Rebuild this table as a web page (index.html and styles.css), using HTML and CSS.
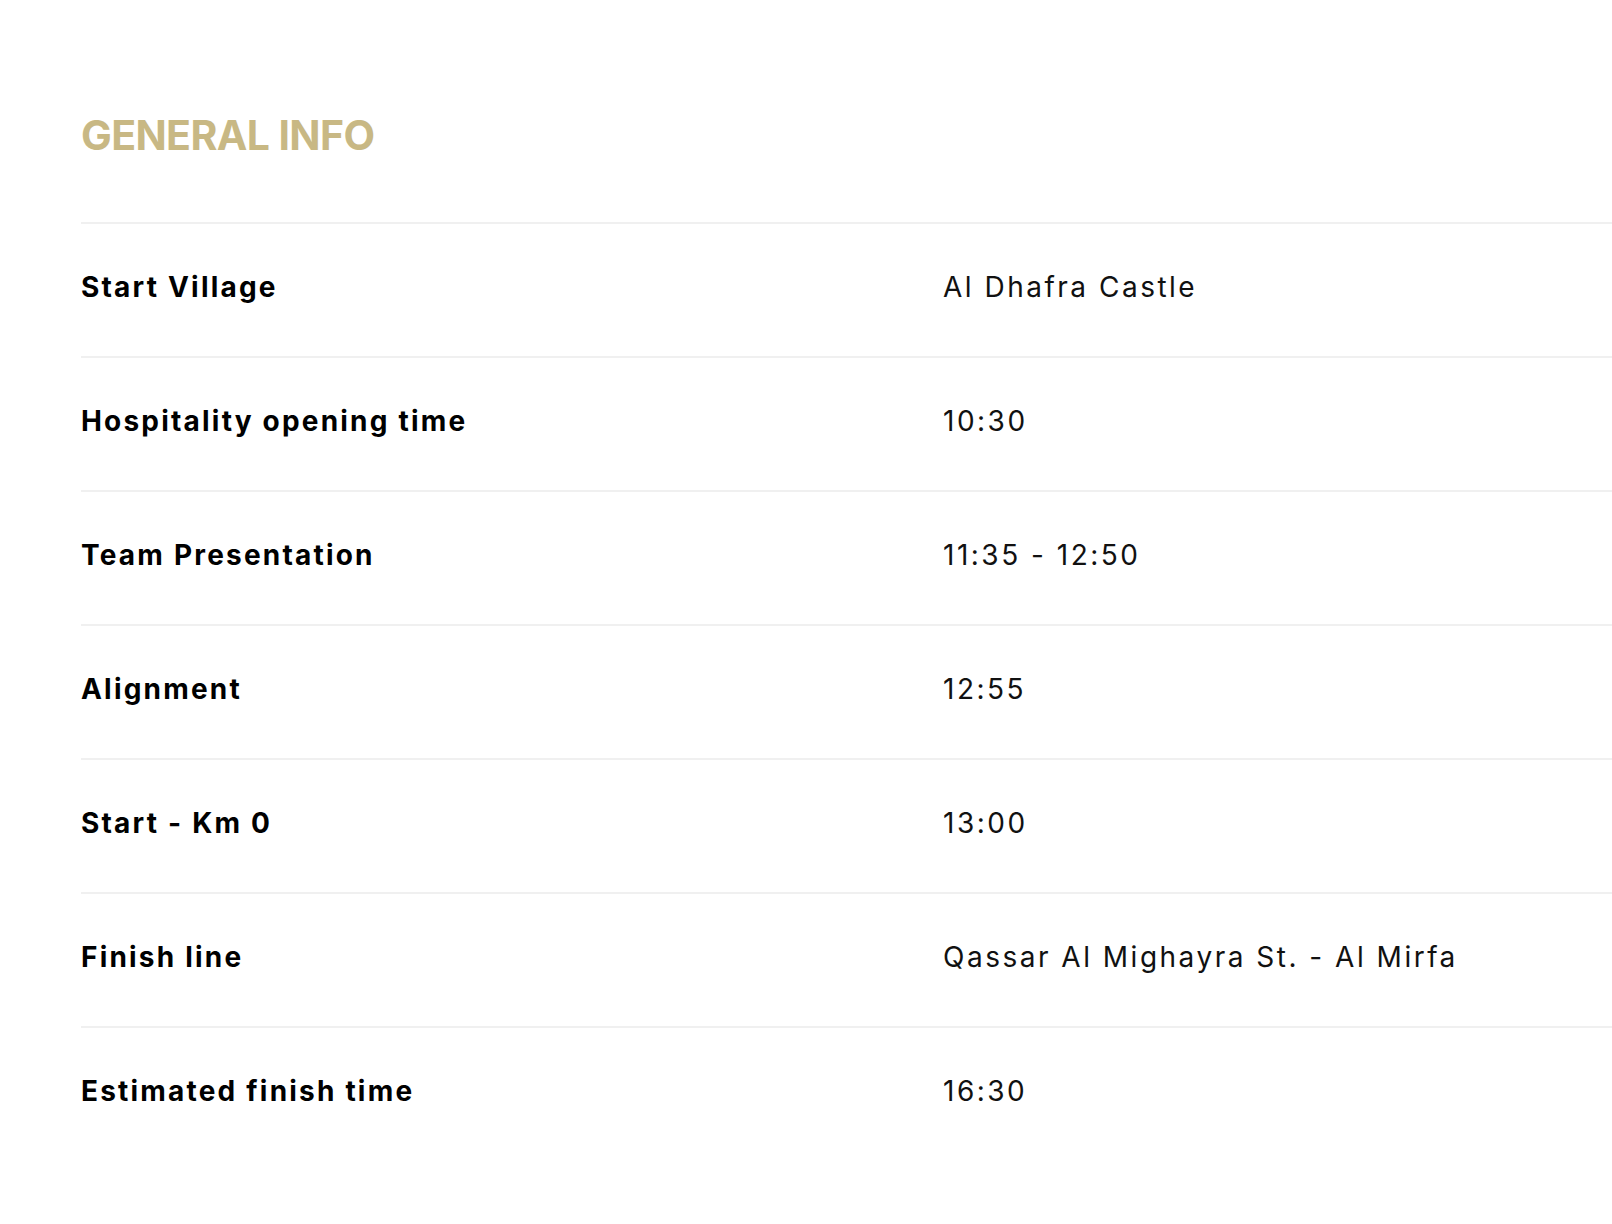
FILE: index.html
```html
<!DOCTYPE html>
<html lang="en">
  <head>
    <meta charset="UTF-8" />
    <meta name="viewport" content="width=device-width, initial-scale=1" />
    <title>General Info</title>
    <link rel="stylesheet" href="styles.css">
  </head>
  <body>
    <section class="general-info">
      <h2>GENERAL INFO</h2>
      <div class="info-table">
        <div class="info-row">
          <span class="info-label">Start Village</span>
          <span class="info-value">Al Dhafra Castle</span>
        </div>
        <div class="info-row">
          <span class="info-label">Hospitality opening time</span>
          <span class="info-value">10:30</span>
        </div>
        <div class="info-row">
          <span class="info-label">Team Presentation</span>
          <span class="info-value">11:35 - 12:50</span>
        </div>
        <div class="info-row">
          <span class="info-label">Alignment</span>
          <span class="info-value">12:55</span>
        </div>
        <div class="info-row">
          <span class="info-label">Start - Km 0</span>
          <span class="info-value">13:00</span>
        </div>
        <div class="info-row">
          <span class="info-label">Finish line</span>
          <span class="info-value">Qassar Al Mighayra St. - Al Mirfa</span>
        </div>
        <div class="info-row">
          <span class="info-label">Estimated finish time</span>
          <span class="info-value">16:30</span>
        </div>
      </div>
    </section>
  </body>
</html>
```

FILE: styles.css
```css
/* Base */
* {
  box-sizing: border-box;
}
body {
  font-family: Inter, "Noto Sans", sans-serif;
  background-color: #ffffff;
  color: #000;
  margin: 0;
  padding: 0;
}

/* Section */
.general-info {
  padding: 111px 0 0 81px;
}
.general-info h2 {
  margin: 0 0 62px;
  font-size: 41px;
  line-height: 49px;
  font-weight: 700;
  letter-spacing: -0.6px;
  color: #c8b884;
}

/* Table */
.info-row {
  display: grid;
  grid-template-columns: 862px 1fr;
  border-top: 2px solid #f0f0f0;
  padding: 46px 0 52px;
}
.info-label,
.info-value {
  font-size: 28px;
  line-height: 34px;
}
.info-label {
  font-weight: 700;
  letter-spacing: 2.2px;
}
.info-value {
  font-weight: 400;
  letter-spacing: 2.5px;
  color: #111;
}
```
